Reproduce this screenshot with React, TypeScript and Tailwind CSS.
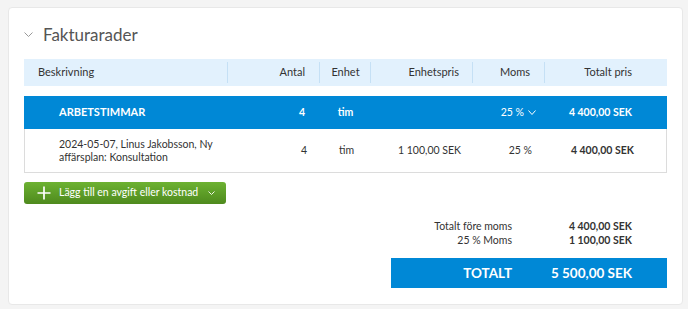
const cols = 'grid grid-cols-[204px_92px_51px_102px_72px_122px]';

function Chevron({ className, w, h }: { className?: string; w: number; h: number }) {
  return (
    <svg width={w} height={h} viewBox={`0 0 ${w} ${h}`} className={className} fill="none">
      <polyline points={`0.5,0.5 ${w / 2},${h - 0.5} ${w - 0.5},0.5`} stroke="currentColor" strokeWidth="1" />
    </svg>
  );
}

function HeaderCell({ label, align, last }: { label: string; align: string; last?: boolean }) {
  return (
    <div className={`relative flex h-full items-center ${align}`}>
      {label}
      {!last && <span className="absolute right-0 top-[3px] bottom-[3px] w-px bg-[#c5e0f5]" />}
    </div>
  );
}

export default function App() {
  return (
    <div className="min-h-screen bg-[#f4f4f4] pl-2 pt-[7px] font-['Lato',sans-serif] text-[10.5px] text-[#333]">
      <div className="h-[298px] w-[675px] rounded-sm border border-[#e8e8e8] bg-white px-[15px] pt-[16px]">
        {/* Title */}
        <div className="flex h-[20px] items-center gap-[10px]">
          <Chevron w={9} h={5} className="text-[#999]" />
          <h2 className="text-[17px] font-normal leading-none text-[#555]">Fakturarader</h2>
        </div>

        {/* Header */}
        <div className={`${cols} mt-[15px] h-[27px] bg-[#e2f1fd] text-[11px] text-[#333]`}>
          <HeaderCell label="Beskrivning" align="pl-[14px]" />
          <HeaderCell label="Antal" align="justify-end pr-[15px]" />
          <HeaderCell label="Enhet" align="justify-center" />
          <HeaderCell label="Enhetspris" align="justify-end pr-[14px]" />
          <HeaderCell label="Moms" align="justify-end pr-[15px]" />
          <HeaderCell label="Totalt pris" align="justify-end pr-[35px]" last />
        </div>

        {/* Group row */}
        <div className={`${cols} mt-[10px] h-[33px] items-center bg-[#0088d6] font-bold text-white`}>
          <div className="pl-[35px] text-[11px]">ARBETSTIMMAR</div>
          <div className="pr-[15px] text-right">4</div>
          <div className="text-center">tim</div>
          <div />
          <div className="flex items-center justify-end gap-[4px] pr-[9px] font-normal">
            25 %
            <Chevron w={8} h={5} />
          </div>
          <div className="pr-[35px] text-right">4 400,00 SEK</div>
        </div>

        {/* Item row */}
        <div className={`${cols} h-[44px] items-center border-x border-b border-[#dcdcdc]`}>
          <div className="pl-[34px] leading-[13px]">
            2024-05-07, Linus Jakobsson, Ny
            <br />
            affärsplan: Konsultation
          </div>
          <div className="pr-[14px] text-right">4</div>
          <div className="text-center">tim</div>
          <div className="pr-[13px] text-right">1 100,00 SEK</div>
          <div className="pr-[14px] text-right">25 %</div>
          <div className="pr-[34px] text-right font-bold">4 400,00 SEK</div>
        </div>

        {/* Add button */}
        <button className="mt-[9px] flex h-[22px] w-[202px] items-center whitespace-nowrap rounded-[3px] bg-gradient-to-b from-[#6db232] to-[#4e8a1d] pl-[13px] text-white">
          <svg width="14" height="14" viewBox="0 0 14 14" fill="none">
            <path d="M7 0.5V13.5M0.5 7H13.5" stroke="currentColor" strokeWidth="1.7" />
          </svg>
          <span className="ml-[8px]">Lägg till en avgift eller kostnad</span>
          <Chevron w={7} h={4} className="ml-[10px] opacity-90" />
        </button>

        {/* Totals */}
        <div className="mt-[15px] flex flex-col items-end">
          <div className="grid w-[276px] grid-cols-[121px_120px] leading-[14px]">
            <div className="text-right">Totalt före moms</div>
            <div className="text-right font-bold">4 400,00 SEK</div>
            <div className="text-right">25 % Moms</div>
            <div className="text-right font-bold">1 100,00 SEK</div>
          </div>
          <div className="mt-[11px] grid h-[30px] w-[276px] grid-cols-[121px_120px] items-center bg-[#0088d6] text-[13.5px] font-bold text-white">
            <div className="text-right">TOTALT</div>
            <div className="text-right">5 500,00 SEK</div>
          </div>
        </div>
      </div>
    </div>
  );
}
